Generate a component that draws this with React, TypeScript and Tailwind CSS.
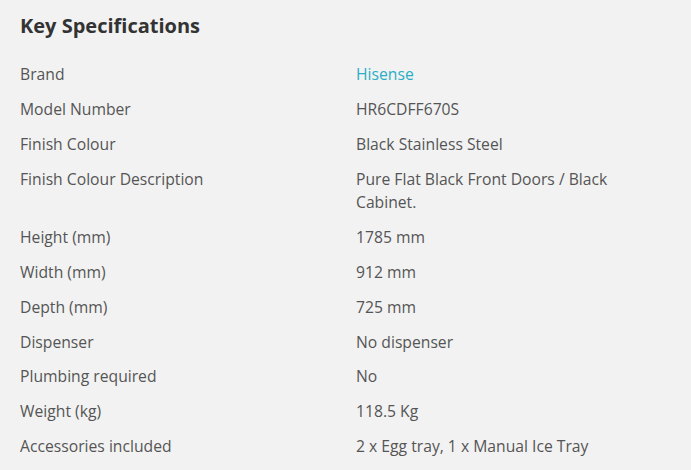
const specs: [string, string][] = [
  ["Brand", "Hisense"],
  ["Model Number", "HR6CDFF670S"],
  ["Finish Colour", "Black Stainless Steel"],
  ["Finish Colour Description", "Pure Flat Black Front Doors / Black Cabinet."],
  ["Height (mm)", "1785 mm"],
  ["Width (mm)", "912 mm"],
  ["Depth (mm)", "725 mm"],
  ["Dispenser", "No dispenser"],
  ["Plumbing required", "No"],
  ["Weight (kg)", "118.5 Kg"],
  ["Accessories included", "2 x Egg tray, 1 x Manual Ice Tray"],
];

export default function App() {
  return (
    <div
      className="min-h-[470px] w-[691px] bg-[#f2f2f2] px-5 pt-3"
      style={{ fontFamily: '"Open Sans", sans-serif' }}
    >
      <h2 className="text-[20px] font-bold leading-[28px] text-[#333333]">Key Specifications</h2>
      <div className="mt-[17.5px] grid grid-cols-[336px_1fr] text-[15.7px] leading-[23px] text-[#555555]">
        {specs.map(([label, value]) => (
          <div key={label} className="contents">
            <div className="py-[5.95px]">{label}</div>
            <div className={`py-[5.95px] pr-[16px] ${label === "Brand" ? "text-[#2aaec6]" : ""}`}>{value}</div>
          </div>
        ))}
      </div>
    </div>
  );
}
